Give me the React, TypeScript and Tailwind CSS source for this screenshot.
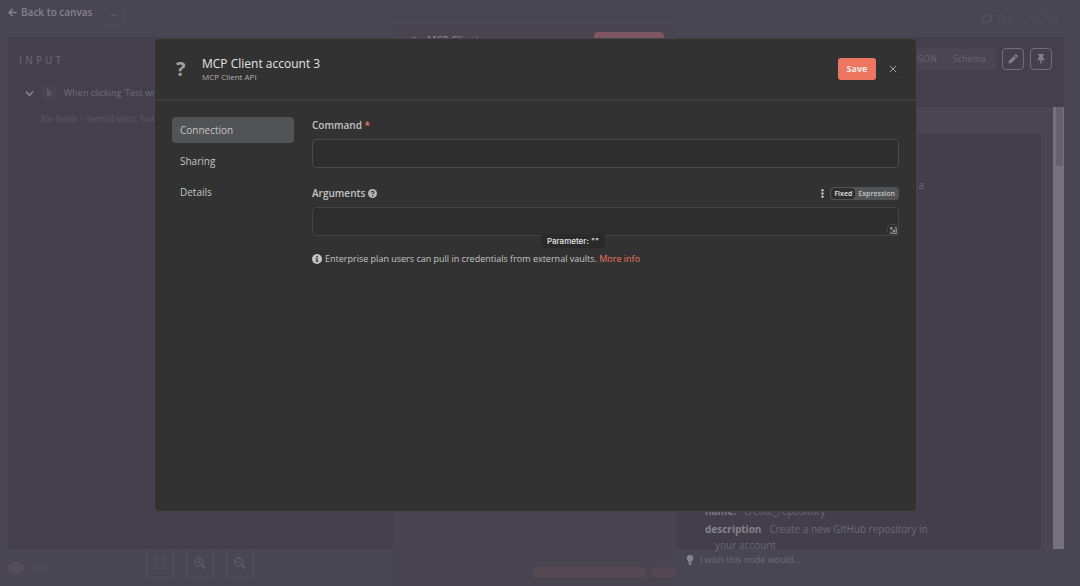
/**
 * @file App.tsx
 * @description Credential editing dialog shown over the dimmed node detail view.
 */

import { useState } from "react";

const TABS = ["Connection", "Sharing", "Details"];

type IconProps = { className?: string };

function ArrowLeftIcon({ className }: IconProps) {
  return (
    <svg viewBox="0 0 10 10" className={className} fill="none" stroke="currentColor" strokeWidth="1.6">
      <path d="M9.6 5H1.4M5 1.2L1.2 5 5 8.8" />
    </svg>
  );
}

function ChevronDownIcon({ className }: IconProps) {
  return (
    <svg viewBox="0 0 10 10" className={className} fill="none" stroke="currentColor" strokeWidth="2">
      <path d="M1.2 3L5 7l3.800-4" />
    </svg>
  );
}

function PencilIcon({ className }: IconProps) {
  return (
    <svg viewBox="0 0 16 16" className={className} fill="currentColor">
      <path d="M11.700.8a1.300 1.300 0 0 1 1.900 0l1.600 1.600a1.300 1.300 0 0 1 0 1.900L13.600 5.900 10.100 2.400zM9.300 3.200l3.500 3.500-7.900 7.900L.8 15.200l.6-4.100z" />
    </svg>
  );
}

function PinIcon({ className }: IconProps) {
  return (
    <svg viewBox="0 0 12 16" className={className} fill="currentColor">
      <path d="M1.500 0h9v2.200H9l.5 4.300c1.500.8 2.300 2 2.500 3.500H7v4.500L6 16l-1-1.500V10H0c.2-1.500 1-2.700 2.500-3.500L3 2.200H1.500z" />
    </svg>
  );
}

function QuestionCircleIcon({ className }: IconProps) {
  return (
    <svg viewBox="0 0 16 16" className={className}>
      <circle cx="8" cy="8" r="8" fill="currentColor" />
      <path d="M5.600 6.200c.2-1.600 1.200-2.300 2.500-2.300 1.400 0 2.500.8 2.500 2.100 0 1.600-2.300 1.800-2.300 3.500" fill="none" stroke="#323232" strokeWidth="1.900" />
      <circle cx="8.200" cy="12" r="1.200" fill="#323232" />
    </svg>
  );
}

function InfoCircleIcon({ className }: IconProps) {
  return (
    <svg viewBox="0 0 16 16" className={className}>
      <circle cx="8" cy="8" r="8" fill="currentColor" />
      <circle cx="8" cy="4.300" r="1.400" fill="#323232" />
      <path d="M6 6.800h3v4h1.200v1.700H5.800v-1.700H7V8.500H6z" fill="#323232" />
    </svg>
  );
}

function SearchIcon({ className, plus }: IconProps & { plus?: boolean }) {
  return (
    <svg viewBox="0 0 16 16" className={className} fill="none" stroke="currentColor">
      <circle cx="6.500" cy="6.500" r="5.200" strokeWidth="2.400" />
      <path d="M10.500 10.500l4.500 4.500" strokeWidth="3" />
      <path d={plus ? "M3.800 6.500h5.400M6.500 3.800v5.400" : "M3.800 6.500h5.400"} strokeWidth="1.600" />
    </svg>
  );
}

function FitIcon({ className }: IconProps) {
  return (
    <svg viewBox="0 0 12 12" className={className} fill="none" stroke="currentColor" strokeWidth="1.500">
      <path d="M1 4V1h3M8 1h3v3M11 8v3H8M4 11H1V8" />
    </svg>
  );
}

function BulbIcon({ className }: IconProps) {
  return (
    <svg viewBox="0 0 10 14" className={className} fill="currentColor">
      <path d="M5 0a4.600 4.600 0 0 1 4.600 4.600C9.600 7 7.600 8 7.200 10H2.800C2.400 8 .4 7 .4 4.600A4.600 4.600 0 0 1 5 0zM3 10.800h4v1.600L6 14H4l-1-1.600z" />
    </svg>
  );
}

/** Small arrow-in-corner glyph that opens the expression editor. */
function OpenEditorIcon({ className }: IconProps) {
  return (
    <svg viewBox="0 0 10 10" className={className} fill="none" stroke="currentColor" strokeWidth="1.200">
      <path d="M1 4V1h3M1.200 1.200l5.300 5.300M6.800 3.600v3.200H3.600M6.600 1H9v8H1V6.600" />
    </svg>
  );
}

/** Node detail view that stays visible behind the dialog. */
function NodeDetailView() {
  return (
    <div className="flex min-h-screen flex-col bg-[#484652] text-[#64616d]">
      <header className="flex h-[37px] items-start pl-2 pr-[22px]">
        <a href="#canvas" className="flex items-center gap-1 pt-1 text-[10px] leading-4 font-semibold text-[#85828d]">
          <ArrowLeftIcon className="h-[9px] w-[9px]" />
          Back to canvas
        </a>
        <button className="ml-3 mt-[6px] h-5 w-5 border-b border-r border-[#514e5a] text-[12px] leading-5 text-[#5b5864]">
          +
        </button>
        <div className="ml-auto flex items-center gap-4 pt-[11px] text-[9px] leading-4 text-[#53505c]">
          <span className="flex items-center gap-1">
            <span className="h-[10px] w-[10px] rounded-full border-2 border-[#53505c]" />
            Test
          </span>
          <span>90,124</span>
        </div>
      </header>

      <div className="grid flex-1 grid-cols-[385fr_283fr_388fr] pl-2 pr-4">
        {/* Input panel */}
        <section className="mb-[37px] overflow-hidden bg-[#43404c] pl-[11px] pt-[15px]">
          <h2 className="text-[10px] leading-4 font-semibold tracking-[0.3em] text-[#64616d]">INPUT</h2>
          <div className="mt-[17px] flex items-center gap-2 pl-[6px] text-[9px] leading-4 whitespace-nowrap">
            <ChevronDownIcon className="h-[9px] w-[9px] text-[#85828d]" />
            <span className="flex h-[14px] w-[14px] items-center justify-center rounded-sm bg-[#484551] text-[8px] font-bold">
              k
            </span>
            <span className="text-[#706d79]">When clicking ‘Test wo</span>
          </div>
          <p className="mt-[10px] pl-[22px] text-[9px] leading-4 whitespace-nowrap text-[#5b5864]">
            No fields - item(s) exist, but
          </p>
        </section>

        {/* Node parameters */}
        <section className="-mt-[15px] border-t border-[#4f4c58] bg-[#484551] px-3">
          <div className="mt-[9px] flex items-start justify-between pl-1">
            <div className="flex items-center gap-2 text-[10px] leading-4 font-semibold text-[#85828d]">
              <span className="mt-[3px] h-[10px] w-[10px] rounded-full border-2 border-[#6d6a8c]" />
              MCP Client
            </div>
            <button aria-label="Test step" className="h-5 w-[70px] rounded-sm bg-[#7f5761]" />
          </div>
        </section>

        {/* Output panel */}
        <section className="mb-[37px] flex min-w-0 flex-col bg-[#43404c]">
          <div className="flex h-[70px] items-start justify-end gap-[6px] pr-3 pt-[11px]">
            <div className="flex h-[22px] items-center gap-4 rounded-sm bg-[#494652] px-[10px] text-[9px] text-[#676471]">
              <span>JSON</span>
              <span>Schema</span>
            </div>
            <button aria-label="Edit output" className="flex h-[22px] w-[22px] items-center justify-center rounded-sm border border-[#706d78] text-[#817e89]">
              <PencilIcon className="h-[10px] w-[10px]" />
            </button>
            <button aria-label="Pin data" className="flex h-[22px] w-[22px] items-center justify-center rounded-sm border border-[#706d78] text-[#817e89]">
              <PinIcon className="h-[10px] w-2" />
            </button>
          </div>
          <div className="flex flex-1">
            <div className="flex min-w-0 flex-1 flex-col bg-[#494652] pr-3">
              <div className="h-[27px]" />
              <div className="flex flex-1 flex-col bg-[#423f4b] pl-[29px] text-[10px] leading-4 text-[#6b6874]">
                <span className="self-end pr-[117px] pt-[43px]">a</span>
                <p className="mt-auto">
                  <b className="mr-2 text-[#7d7a85]">name:</b>create_repository
                </p>
                <p className="mt-[2px]">
                  <b className="mr-2 text-[#85828d]">description</b>Create a new GitHub repository in
                </p>
                <p className="-mb-[4px] pl-[10px]">your account</p>
              </div>
            </div>
            <div className="w-[11px] bg-[#75727d] pl-[3px]">
              <div className="h-[59px] w-[7px] bg-[#64616d]" />
            </div>
          </div>
        </section>
      </div>

      {/* Canvas controls peeking out along the bottom edge */}
      <footer className="-mt-[37px] grid h-[37px] grid-cols-[385fr_283fr_388fr] pl-2 pr-4">
        <div className="flex items-start">
          <span className="mt-[13px] h-3 w-4 rounded-full bg-[#524d58]" />
          <span className="ml-2 mt-3 text-[9px] text-[#53505c]">n8n</span>
          <div className="ml-auto mr-[139px] flex gap-3 text-[#5a5763]">
            <button aria-label="Zoom to fit" className="flex h-[29px] w-7 items-center justify-center border border-t-0 border-[#514e5a] text-[#53505c]">
              <FitIcon className="h-3 w-3" />
            </button>
            <button aria-label="Zoom in" className="flex h-[29px] w-7 items-center justify-center border border-t-0 border-[#514e5a]">
              <SearchIcon plus className="h-3 w-3" />
            </button>
            <button aria-label="Zoom out" className="flex h-[29px] w-7 items-center justify-center border border-t-0 border-[#514e5a]">
              <SearchIcon className="h-3 w-3" />
            </button>
          </div>
        </div>
        <div className="flex items-start justify-end gap-[6px] pt-[18px]">
          <span className="h-[11px] w-[113px] rounded-sm bg-[#564853]" />
          <span className="h-[11px] w-6 rounded-sm bg-[#524753]" />
        </div>
        <div className="flex items-start gap-[6px] pl-[10px] pt-[3px] text-[9px] leading-4 text-[#706d79]">
          <BulbIcon className="mt-[3px] h-[10px] w-2 text-[#85828d]" />
          I wish this node would...
        </div>
      </footer>
    </div>
  );
}

export default function App() {
  const [tab, setTab] = useState("Connection");
  const [command, setCommand] = useState("");
  const [args, setArgs] = useState("");
  const [mode, setMode] = useState("Fixed");

  return (
    <div className="relative min-h-screen overflow-hidden font-['Open_Sans',sans-serif]">
      <NodeDetailView />

      {/* Dialog layer */}
      <div className="absolute inset-0 flex pb-[74px] pl-[154px] pr-[163px] pt-[38px]">
        <div
          role="dialog"
          aria-labelledby="dialog-title"
          className="flex min-w-0 flex-1 flex-col rounded-[5px] border border-[#45444b] bg-[#323232] text-[#c4c4c4]"
        >
          <div className="flex h-[62px] items-center border-b-2 border-[#3d3d3d] px-[17px]">
            <span className="w-[30px] pl-1 text-[20px] leading-6 font-bold text-[#a0a0a0]">?</span>
            <div className="pt-[2px]">
              <h1 id="dialog-title" className="text-[12px] leading-[14px] text-[#e4e4e4]">
                MCP Client account 3
              </h1>
              <p className="text-[8px] leading-3 text-[#b0b0b0]">MCP Client API</p>
            </div>
            <button className="ml-auto h-[22px] w-[38px] rounded-[3px] bg-[#ee7660] text-[9px] font-bold text-[#fbe9e5]">
              Save
            </button>
            <button aria-label="Close" className="ml-3 mr-px flex h-[10px] w-[10px] items-center justify-center text-[#a0a0a0]">
              <svg viewBox="0 0 8 8" className="h-2 w-2" stroke="currentColor" strokeWidth="1">
                <path d="M.8.8l6.400 6.400M7.200.8L.8 7.200" />
              </svg>
            </button>
          </div>

          <div className="flex flex-1 gap-[18px] px-[17px] pt-4">
            <nav className="flex w-[122px] flex-col gap-[5px]">
              {TABS.map((name) => (
                <button
                  key={name}
                  onClick={() => setTab(name)}
                  className={`h-[26px] rounded-sm px-2 text-left text-[10px] ${tab === name ? "bg-[#525354]" : ""}`}
                >
                  {name}
                </button>
              ))}
            </nav>

            <div className="min-w-0 flex-1">
              <label htmlFor="command" className="block text-[10px] leading-4 font-semibold">
                Command <span className="text-[#ee7660]">*</span>
              </label>
              <input
                id="command"
                value={command}
                onChange={(e) => setCommand(e.target.value)}
                className="mt-[6px] block h-[29px] w-full rounded-sm border border-[#4a4a4a] bg-[#2e2e2e] px-2 text-[10px] focus:outline-none"
              />

              <div className="mt-[17px] flex h-4 items-center">
                <label htmlFor="arguments" className="text-[10px] leading-4 font-semibold">
                  Arguments
                </label>
                <QuestionCircleIcon className="ml-[3px] h-[9px] w-[9px] text-[#b5b5b5]" />
                <button aria-label="Options" className="ml-auto mr-1 flex h-3 w-2 items-center justify-center">
                  <svg viewBox="0 0 3 9" className="h-[9px] w-[3px]" fill="currentColor">
                    <circle cx="1.500" cy="1.300" r="1.200" />
                    <circle cx="1.500" cy="4.500" r="1.200" />
                    <circle cx="1.500" cy="7.700" r="1.200" />
                  </svg>
                </button>
                <div className="flex h-[13px] items-center rounded-sm bg-[#525354] p-px text-[7px]">
                  {["Fixed", "Expression"].map((name) => (
                    <button
                      key={name}
                      onClick={() => setMode(name)}
                      className={`h-[11px] rounded-sm px-[3px] leading-[11px] font-semibold ${mode === name ? "bg-[#2e2e2e] text-[#e8e8e8]" : ""}`}
                    >
                      {name}
                    </button>
                  ))}
                </div>
              </div>

              <div className="relative mt-[6px]">
                <input
                  id="arguments"
                  value={args}
                  onChange={(e) => setArgs(e.target.value)}
                  className="block h-[29px] w-full rounded-sm border border-[#434343] bg-[#2e2e2e] px-2 text-[10px] focus:outline-none"
                />
                <button
                  aria-label="Open editor"
                  className="absolute bottom-0 right-0 flex h-3 w-3 items-center justify-center rounded-sm border border-[#434343] text-[#b5b5b5]"
                >
                  <OpenEditorIcon className="h-[7px] w-[7px]" />
                </button>
                <div className="absolute left-[39%] top-[27px] rounded-sm bg-[#2a2a2a] px-[6px] font-['Inter',sans-serif] text-[8px] leading-[14px] font-medium text-[#e8e8e8]">
                  Parameter: ""
                </div>
              </div>

              <p className="mt-[15px] flex items-center gap-[3px] text-[9px] leading-4 font-medium">
                <InfoCircleIcon className="h-[10px] w-[10px]" />
                <span>
                  Enterprise plan users can pull in credentials from external vaults.{" "}
                  <a href="#more-info" className="text-[#ee7660]">
                    More info
                  </a>
                </span>
              </p>
            </div>
          </div>
        </div>
      </div>
    </div>
  );
}
